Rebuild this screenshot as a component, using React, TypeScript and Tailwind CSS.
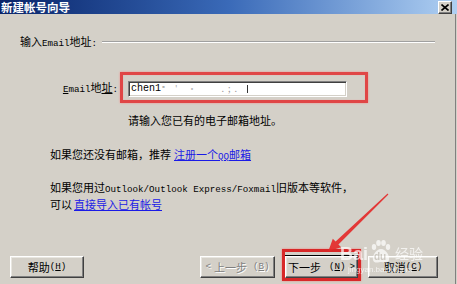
import React from "react";

const M = ({ children, className = "" }: { children: React.ReactNode; className?: string }) => (
  <span className={`font-['Liberation_Mono',monospace] text-[9.2px] ${className}`}>{children}</span>
);

function Btn({
  className,
  children,
  disabled,
}: {
  className: string;
  children: React.ReactNode;
  disabled?: boolean;
}) {
  return (
    <div
      className={`flex h-[22px] items-center justify-center border border-t-white border-l-white border-r-[#404040] border-b-[#404040] bg-[#d4d0c8] shadow-[inset_-1px_-1px_0_#808080,inset_1px_1px_0_#e8e6e0] ${
        disabled ? "text-[#808080] [text-shadow:1px_1px_0_#ffffff]" : "text-black"
      } ${className}`}
    >
      {children}
    </div>
  );
}

export default function App() {
  return (
    <div className="relative h-[284px] w-[457px] overflow-hidden bg-[#d4d0c8] font-['Noto_Sans_CJK_SC','Noto_Sans',sans-serif] text-[11px] leading-[12px] text-black">
      {/* title bar */}
      <div className="flex h-[14px] items-center justify-between bg-linear-to-r from-[#0a246a] via-[#3a6ab8] to-[#b0d0f2] pr-[5px]">
        <span className="pl-[1px] text-[11.5px] font-bold leading-[14px] text-white">新建帐号向导</span>
        <div className="flex h-[13px] w-[14px] items-center justify-center border border-t-white border-l-white border-r-[#404040] border-b-[#404040] bg-[#d4d0c8] shadow-[inset_-1px_-1px_0_#808080]">
          <svg width="8" height="7" viewBox="0 0 8 7">
            <path d="M0.5 0.5 L7.5 6.5 M7.5 0.5 L0.5 6.5" stroke="#000" strokeWidth="1.6" />
          </svg>
        </div>
      </div>

      {/* body */}
      <div className="flex h-[270px] w-[456px] flex-col border-r border-r-[#808080]">
        <div className="mt-[22px] flex h-[12px] items-center pl-[20px] pr-[20px]">
          <span className="whitespace-nowrap">
            输入<M>Email</M>地址<M>:</M>
          </span>
          <div className="ml-[5px] h-0 flex-1 border-t border-b border-t-[#a0a0a0] border-b-white" />
        </div>

        <div className="mt-[24px] flex items-center">
          <div className="w-[118px] whitespace-nowrap pt-[2px] text-right">
            <M>
              <u>E</u>mail
            </M>
            地<u>址</u>
            <M>:</M>
          </div>
          <div className="ml-[2px] h-[31px] w-[248px] border-[3px] border-[#e04646] pl-[5px] pt-[6px] shadow-[0_0_2px_#f09090,inset_0_0_1px_#f09090]">
            <div className="flex h-[16px] w-[219px] items-center whitespace-nowrap border border-t-[#808080] border-l-[#808080] border-b-white border-r-white bg-white pl-[2px] shadow-[inset_1px_1px_0_#404040,inset_-1px_-1px_0_#d4d0c8]">
              <M className="text-[10px]">chen1</M>
              <span className="ml-[1px] text-[8px] text-[#888]">°</span>
              <span className="ml-[10px] text-[9px] text-[#aaa]">'</span>
              <span className="ml-[10px] text-[9px] text-[#bbb]">·</span>
              <span className="ml-[25px] text-[9px] text-[#999]">.</span>
              <span className="ml-[4px] text-[9px] text-[#999]">;</span>
              <span className="ml-[4px] text-[9px] text-[#999]">.</span>
              <span className="ml-[10px] h-[8px] w-[1px] bg-[#333]" />
            </div>
          </div>
        </div>

        <div className="mt-[11px] pl-[128px]">请输入您已有的电子邮箱地址。</div>

        <div className="mt-[22px] whitespace-nowrap pl-[50px]">
          如果您还没有邮箱，推荐
          <span className="ml-[3px] text-[#1a1ae6] underline underline-offset-1">
            注册一个<M>QQ</M>邮箱
          </span>
        </div>

        <div className="mt-[17px] whitespace-nowrap pl-[50px] leading-[15px]">
          如果您用过<M>Outlook/Outlook Express/Foxmail</M>旧版本等软件，
          <br />
          可以
          <span className="ml-[2px] text-[#1a1ae6] underline underline-offset-1">直接导入已有帐号</span>
        </div>

        <div className="mt-auto mb-[6px] flex items-center">
          <Btn className="ml-[10px] w-[74px]">
            帮助<M>
              (<u>H</u>)
            </M>
          </Btn>
          <Btn className="ml-[116px] w-[75px]" disabled>
            <M>&lt;</M>
            <span className="ml-[3px]">上一步</span>
            <M className="ml-[6px]">
              (<u>B</u>)
            </M>
          </Btn>
          <div className="relative ml-[10px]">
            <Btn className="w-[73px] outline outline-1 outline-black">
              下一步
              <M className="ml-[8px]">
                (<u>N</u>)
              </M>
              <M className="ml-[4px]">&gt;</M>
            </Btn>
            <div className="pointer-events-none absolute -left-[3px] -top-[7px] h-[32px] w-[79px] border-[3px] border-[#d82828] shadow-[0_0_2px_#f08080]" />
          </div>
          <Btn className="ml-[10px] w-[70px]">
            取消<M>
              (<u>C</u>)
            </M>
          </Btn>
        </div>
      </div>

      {/* red arrow annotation */}
      <svg className="pointer-events-none absolute left-0 top-0" width="457" height="284" viewBox="0 0 457 284">
        <polygon
          points="388.4,194.4 338.4,244.4 341.2,247.3 328.3,251.3 332.8,238.7 335.6,241.6 387.6,193.6"
          fill="#e42a2a"
          opacity="0.92"
        />
      </svg>

      {/* Baidu watermark */}
      <div className="pointer-events-none absolute left-[340px] top-[240px] flex flex-col items-start opacity-70">
        <div className="flex items-end">
          <span className="font-['Liberation_Sans',sans-serif] text-[18px] font-bold leading-[20px] text-white">Bai</span>
          <div className="relative ml-[2px] h-[24px] w-[22px]">
            <svg width="22" height="24" viewBox="0 0 22 24" className="absolute left-0 top-0">
              <ellipse cx="4" cy="7" rx="2.2" ry="3" fill="#fff" />
              <ellipse cx="8.5" cy="3" rx="2.3" ry="3" fill="#fff" />
              <ellipse cx="13.5" cy="3" rx="2.3" ry="3" fill="#fff" />
              <ellipse cx="18" cy="7" rx="2.2" ry="3" fill="#fff" />
              <path d="M11 9 C6 9 2 16 3 20 C4 24 9 22 11 22 C13 22 18 24 19 20 C20 16 16 9 11 9 Z" fill="#fff" />
            </svg>
            <span className="absolute left-[4px] top-[12px] font-['Liberation_Sans',sans-serif] text-[10px] font-bold leading-[10px] text-[#c8c4bc]">
              du
            </span>
          </div>
          <span className="ml-[3px] mb-[3px] text-[14px] leading-[16px] text-white">经验</span>
        </div>
        <span className="ml-[8px] mt-[1px] font-['Liberation_Sans',sans-serif] text-[8px] leading-[9px] text-white">
          jingyan.baidu.com
        </span>
      </div>
    </div>
  );
}
